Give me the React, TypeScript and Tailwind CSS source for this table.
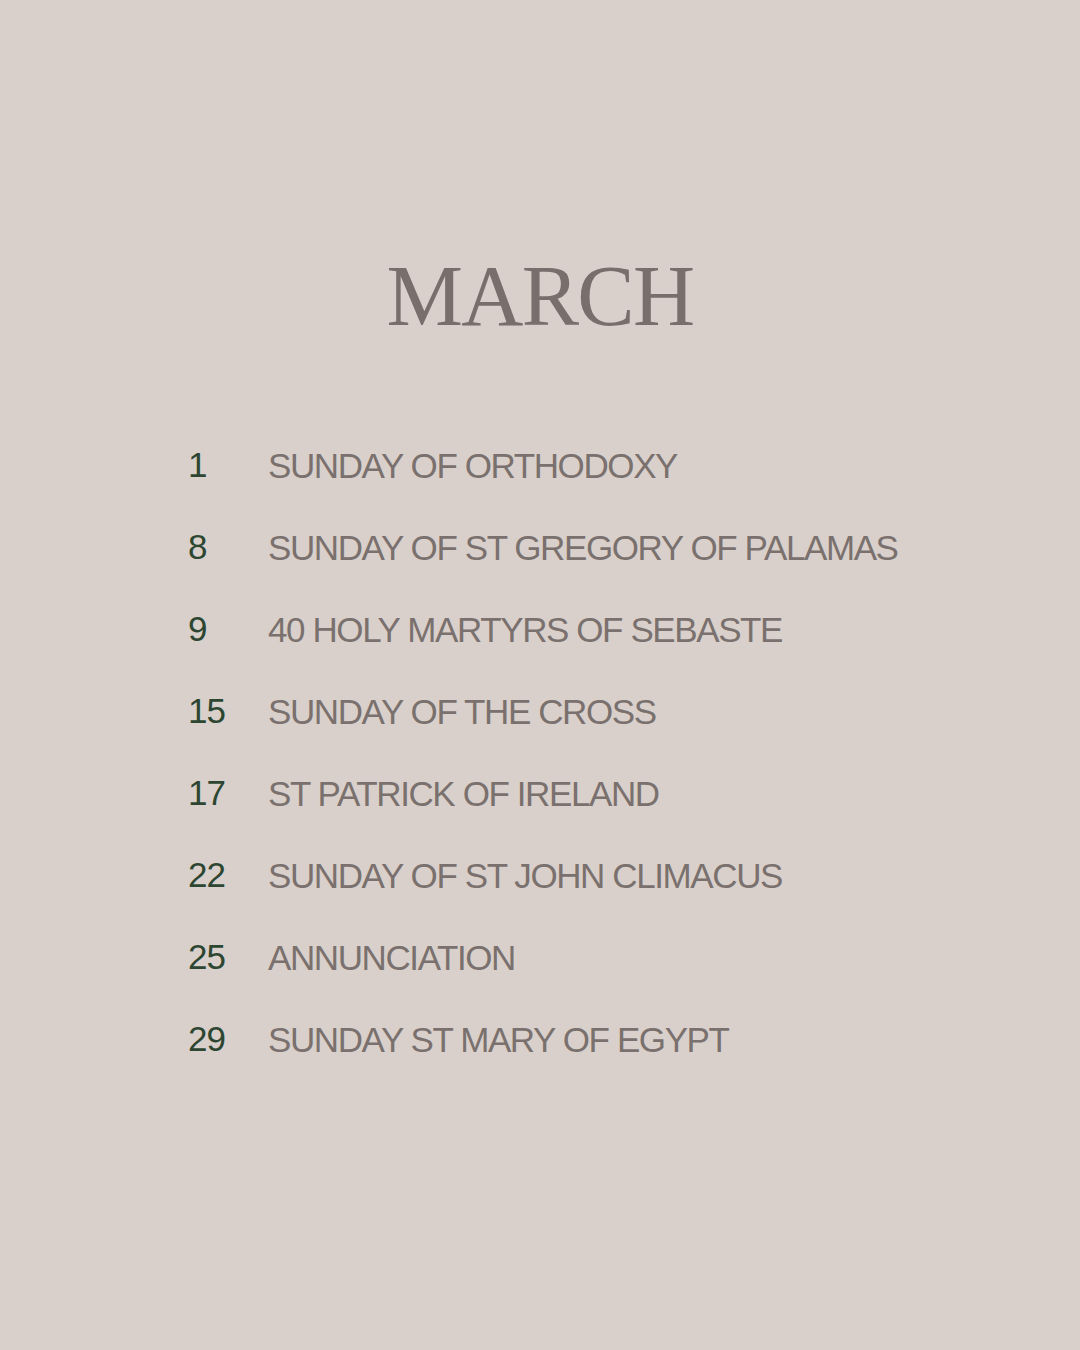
export default function App() {
  const rows: [string, string][] = [
    ["1", "SUNDAY OF ORTHODOXY"],
    ["8", "SUNDAY OF ST GREGORY OF PALAMAS"],
    ["9", "40 HOLY MARTYRS OF SEBASTE"],
    ["15", "SUNDAY OF THE CROSS"],
    ["17", "ST PATRICK OF IRELAND"],
    ["22", "SUNDAY OF ST JOHN CLIMACUS"],
    ["25", "ANNUNCIATION"],
    ["29", "SUNDAY ST MARY OF EGYPT"],
  ];
  return (
    <div className="w-[1080px] h-[1350px] bg-[#d9d0cb] flex flex-col">
      <div className="pt-[253px] flex justify-center">
        <h1 className="text-[86px] leading-none tracking-[-0.02em] text-[#786f6c]" style={{ fontFamily: '"Liberation Serif", serif' }}>
          MARCH
        </h1>
      </div>
      <div className="mt-[86px] pl-[188px] flex flex-col" style={{ fontFamily: '"Liberation Sans", Arial, sans-serif' }}>
        {rows.map(([n, t]) => (
          <div key={n} className="flex h-[82px] items-center">
            <span className="w-[80px] text-[35px] text-[#2d4631] -translate-y-[1px] tracking-[-0.03em]">{n}</span>
            <span className="text-[35px] text-[#7a716e] tracking-[-0.04em]">{t}</span>
          </div>
        ))}
      </div>
    </div>
  );
}
